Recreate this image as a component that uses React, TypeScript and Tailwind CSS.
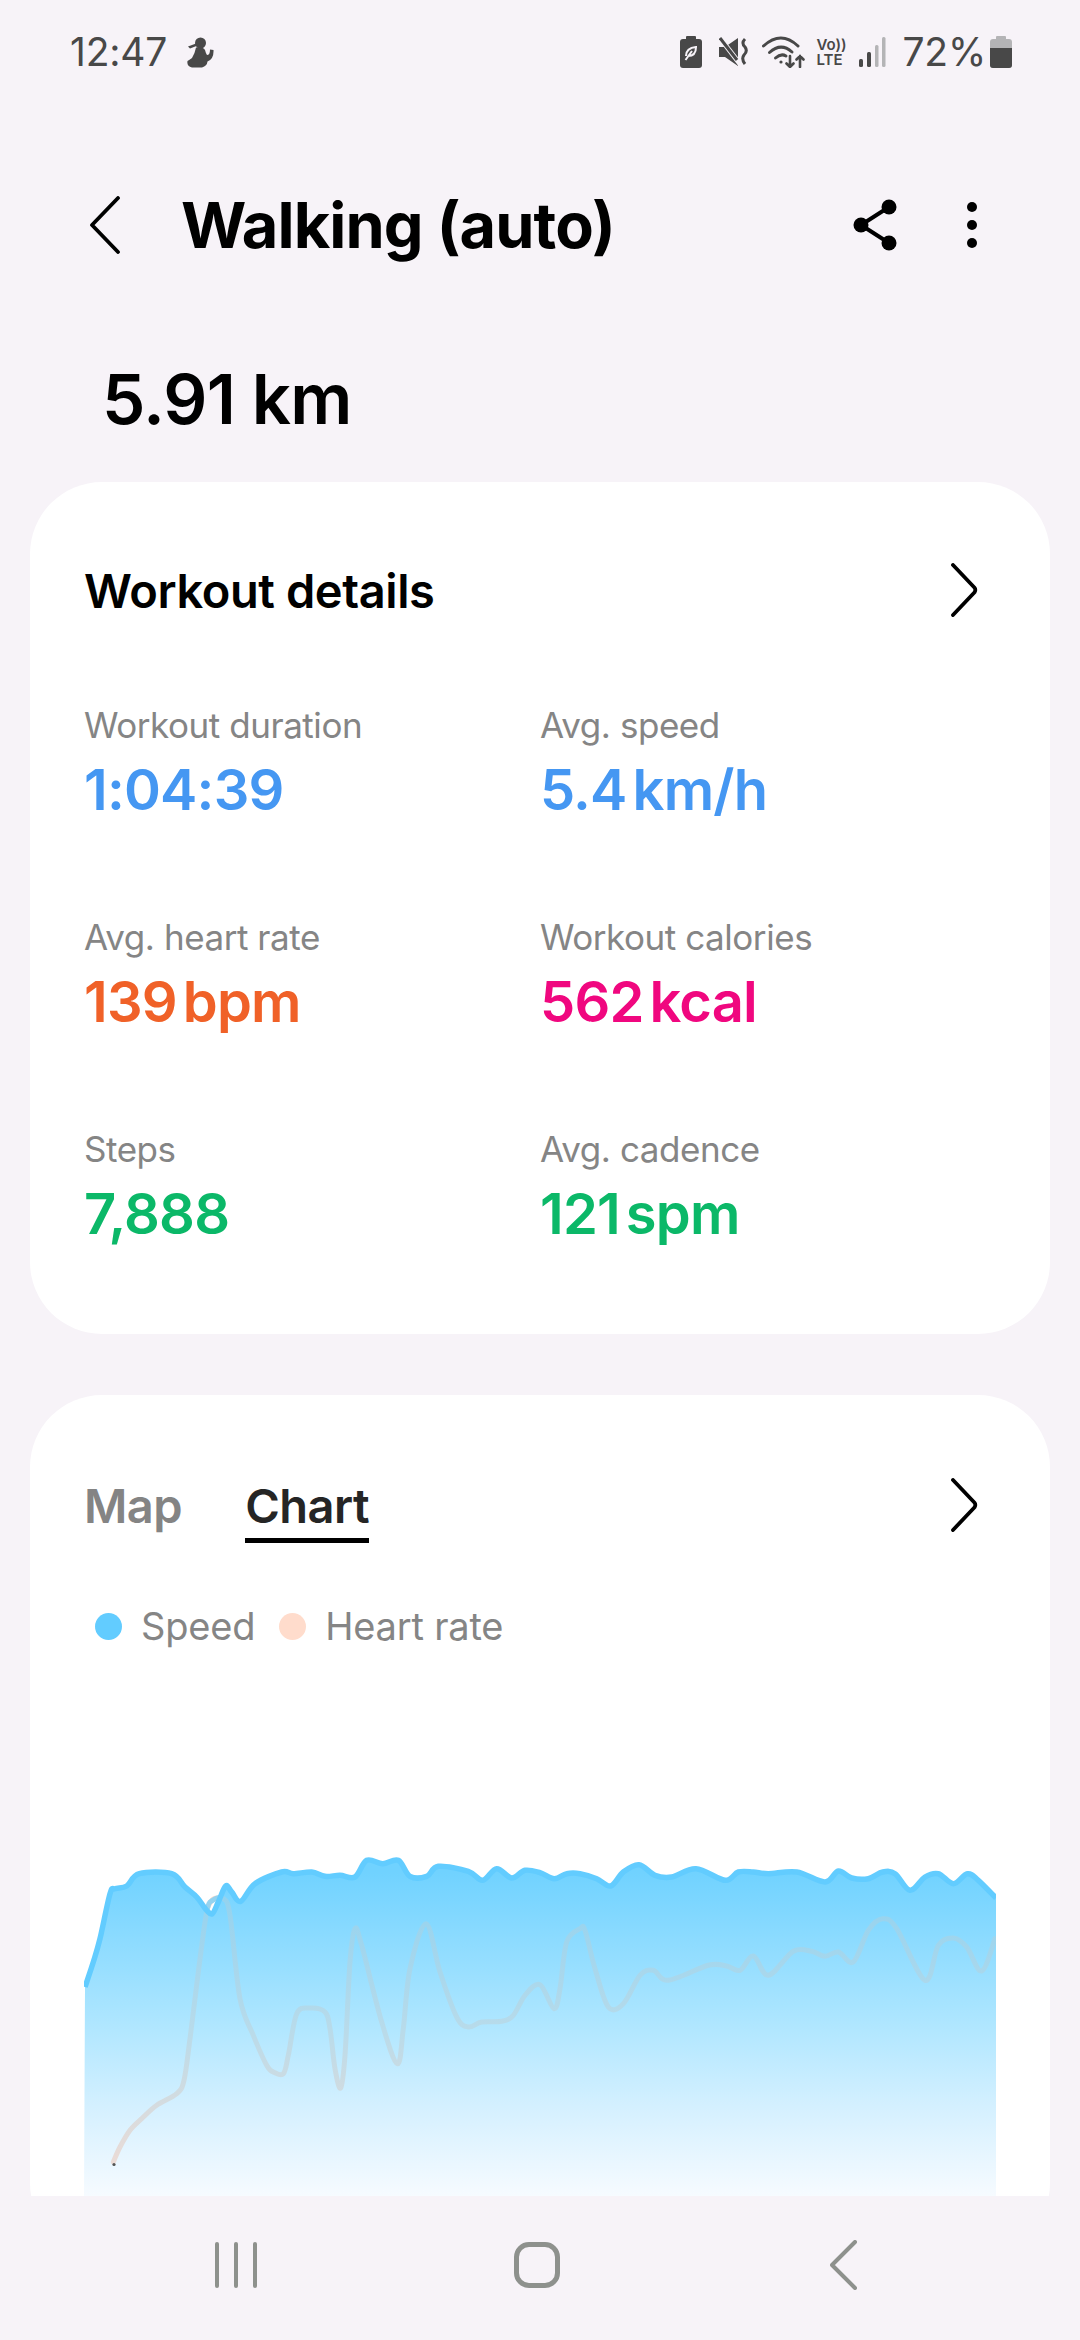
import React from "react";

type P = [number, number];

const speedA: P[] = [[75,495],[100,420],[120,350],[150,215],[165,200],[200,192],[238,155],[335,155],[375,195],[410,225],[440,265],[457,275],[475,240],[497,192],[515,210],[542,238],[585,185],[665,150],[700,155],[755,150],[795,163],[840,160],[885,165],[920,115],[968,125],[1015,115],[1050,163],[1100,163],[1135,133],[1225,148],[1268,175],[1310,140],[1355,168],[1395,145],[1440,152],[1483,170],[1520,155],[1560,155]];
const speedB: P[] = [[110,170],[152,192],[190,150],[237,128],[285,160],[335,165],[408,140],[495,175],[535,150],[580,150],[625,155],[710,150],[795,180],[835,147],[875,168],[925,170],[968,150],[1005,155],[1050,205],[1095,165],[1135,155],[1180,185],[1222,155],[1255,175],[1308,228]];
const hrA: P[] = [[160,1020],[180,975],[210,925],[245,890],[290,850],[350,815],[372,775],[390,650],[415,450],[440,270],[458,235],[490,230],[510,280],[540,530],[580,640],[620,730],[640,750],[670,755],[685,700],[710,575],[750,558],[795,570],[810,620],[825,740],[842,798],[855,700],[870,420],[885,320],[905,370],[965,600],[1012,725],[1030,620],[1050,440],[1098,305],[1140,450],[1190,585],[1225,615],[1265,600],[1325,598],[1360,580],[1395,520],[1440,488],[1482,560],[1500,500],[1520,360],[1560,320]];
const hrB: P[] = [[75,325],[105,440],[145,555],[190,545],[240,460],[280,445],[325,475],[445,430],[500,432],[540,445],[580,402],[625,460],[700,388],[755,388],[795,403],[835,390],[880,420],[925,325],[968,290],[1010,320],[1095,475],[1135,370],[1180,348],[1220,375],[1265,447],[1305,350]];

const toAbs = (a: P[], b: P[]): P[] => [
  ...a.map(([x, y]): P => [60 + x / 3, 1820 + y / 3]),
  ...b.map(([x, y]): P => [560 + x / 3, 1820 + y / 3]),
];

function smooth(pts: P[]): string {
  let d = `M${pts[0][0].toFixed(1)} ${pts[0][1].toFixed(1)}`;
  for (let i = 0; i < pts.length - 1; i++) {
    const p0 = pts[Math.max(i - 1, 0)];
    const p1 = pts[i];
    const p2 = pts[i + 1];
    const p3 = pts[Math.min(i + 2, pts.length - 1)];
    const k = 6;
    d += ` C${(p1[0] + (p2[0] - p0[0]) / k).toFixed(1)} ${(p1[1] + (p2[1] - p0[1]) / k).toFixed(1)} ${(p2[0] - (p3[0] - p1[0]) / k).toFixed(1)} ${(p2[1] - (p3[1] - p1[1]) / k).toFixed(1)} ${p2[0].toFixed(1)} ${p2[1].toFixed(1)}`;
  }
  return d;
}

const speedD = smooth(toAbs(speedA, speedB));
const hrD = smooth(toAbs(hrA, hrB));

function Chevron({ className }: { className?: string }) {
  return (
    <svg width="28" height="54" viewBox="0 0 28 54" className={className} fill="none">
      <path d="M3 2 L24.6 24.8 Q26 27 24.6 29.2 L3 52" stroke="#000" strokeWidth="3.8" strokeLinecap="round" strokeLinejoin="round" />
    </svg>
  );
}

function Stat({ label, value, unit, color }: { label: string; value: string; unit?: string; color: string }) {
  return (
    <div className="flex flex-col">
      <div className="text-[35px] leading-[40px] text-[#858585] tracking-[-0.45px]">{label}</div>
      <div className={`mt-[12px] flex items-baseline gap-[6px] text-[56px] leading-[66px] font-semibold tracking-[-0.8px] ${color}`}>
        <span>{value}</span>
        {unit ? <span>{unit}</span> : null}
      </div>
    </div>
  );
}

export default function App() {
  return (
    <div className="flex h-[2340px] w-[1080px] flex-col overflow-hidden bg-[#f7f3f8] font-['Inter','Roboto',sans-serif]">
      <div className="flex h-[2196px] flex-col overflow-hidden">
        {/* Status bar */}
        <div className="flex h-[104px] shrink-0 items-center justify-between pl-[70px] pr-[68px] text-[39px] text-[#484848]">
          <div className="flex items-center gap-[20px]">
            <span className="font-normal tracking-[-0.2px]">12:47</span>
            <svg width="27" height="31" viewBox="0 0 27 31" fill="#484848">
              <circle cx="13.5" cy="6" r="5.5" />
              <path d="M1 9.5 L9 6.5 L9.5 9 L3 11.5 Z" />
              <path d="M9 10.5 Q16 9.5 18 13 Q19 17 20 18 Q23 18 23 12.5 L26.5 13 Q27 22 20.5 24.5 Q20 29 15 30.5 L5 30.5 Q-0.5 29.5 0.5 24 Q3 22.5 5 21 Q8 16 9 10.5 Z" />
            </svg>
          </div>
          <div className="flex items-center">
            <svg width="22" height="32" viewBox="0 0 22 32" fill="#484848">
              <rect x="6" y="0" width="10" height="4" rx="1" />
              <rect x="0" y="3" width="22" height="29" rx="3" />
              <path d="M6 20 Q6 12 16 11 Q16 20 8 20 M5.5 24 L12 15" stroke="#f7f3f8" strokeWidth="2" fill="none" />
            </svg>
            <svg className="ml-[17px]" width="30" height="30" viewBox="0 0 30 30" fill="none">
              <path d="M0 10 L6 10 L19 1 L19 29 L6 20 L0 20 Z" fill="#484848" />
              <path d="M1 1 L21 27" stroke="#f7f3f8" strokeWidth="5" />
              <path d="M1 1 L18 23" stroke="#484848" strokeWidth="3" />
              <path d="M26 2 Q22 6 26 10 Q29 14 25 18 Q22 22 26 27" stroke="#484848" strokeWidth="3" />
            </svg>
            <svg className="ml-[13px]" width="44" height="32" viewBox="0 0 44 32" fill="none" stroke="#484848" strokeWidth="3" strokeLinecap="round">
              <path d="M1.5 10 Q19 -6 36 10" />
              <path d="M7.5 16.5 Q19 6 30 16" />
              <path d="M13.5 22 Q19 17 24 20" />
              <circle cx="19" cy="26" r="1.6" fill="#484848" stroke="none" />
              <path d="M28 20 L28 31 M24.5 27.5 L28 31 L31.5 27.5" strokeWidth="2.6" />
              <path d="M38 31 L38 20 M34.5 23.5 L38 20 L41.5 23.5" strokeWidth="2.6" />
            </svg>
            <div className="ml-[10px] flex w-[30px] flex-col items-center text-[15px] font-semibold leading-[15px] text-[#484848]">
              <span className="w-full text-left">Vo))</span>
              <span className="w-full text-left">LTE</span>
            </div>
            <svg className="ml-[13px]" width="27" height="30" viewBox="0 0 27 30" fill="none">
              <rect x="0" y="22" width="4" height="8" rx="1.5" fill="#484848" />
              <rect x="8" y="15" width="4" height="15" rx="1.5" fill="#484848" />
              <rect x="16" y="8" width="3.5" height="22" rx="1.5" fill="#b4b4b6" />
              <rect x="23" y="0" width="3.5" height="30" rx="1.5" fill="#b4b4b6" />
            </svg>
            <span className="ml-[16px] tracking-[-0.2px]">72%</span>
            <svg className="ml-[4px]" width="22" height="32" viewBox="0 0 22 32">
              <rect x="6" y="0" width="10" height="4" rx="1" fill="#b4b4b6" />
              <rect x="0" y="3" width="22" height="29" rx="3" fill="#b4b4b6" />
              <path d="M0 12 H22 V29 Q22 32 19 32 H3 Q0 32 0 29 Z" fill="#484848" />
            </svg>
          </div>
        </div>

        {/* Header */}
        <div className="mt-[51px] flex h-[140px] shrink-0 items-center pl-[89px]">
          <svg width="34" height="58" viewBox="0 0 34 58" fill="none">
            <path d="M29 2 L3 29 L29 56" stroke="#000" strokeWidth="3.8" strokeLinecap="round" strokeLinejoin="round" />
          </svg>
          <h1 className="ml-[58px] text-[63px] font-bold leading-none tracking-[-0.9px] text-black">Walking (auto)</h1>
          <svg className="ml-auto" width="46" height="52" viewBox="0 0 46 52" fill="#000">
            <circle cx="8" cy="26" r="7.5" />
            <circle cx="36" cy="8" r="7.5" />
            <circle cx="36" cy="44" r="7.5" />
            <path d="M8 26 L36 8 M8 26 L36 44" stroke="#000" strokeWidth="4" />
          </svg>
          <div className="ml-[68px] mr-[103px] flex flex-col gap-[8px]">
            <span className="h-[10px] w-[10px] rounded-full bg-black" />
            <span className="h-[10px] w-[10px] rounded-full bg-black" />
            <span className="h-[10px] w-[10px] rounded-full bg-black" />
          </div>
        </div>

        {/* Distance */}
        <div className="mt-[65px] h-[78px] shrink-0 pl-[102px] text-[69px] font-semibold leading-[78px] tracking-[-0.8px] text-black">
          5.91 km
        </div>

        {/* Workout details card */}
        <section className="mt-[44px] h-[852px] shrink-0 mx-[30px] rounded-[72px] bg-white pl-[54px] pr-[72px] pt-[78px]">
          <div className="flex h-[60px] items-center justify-between">
            <h2 className="text-[47px] font-semibold leading-none tracking-[-0.4px] text-black">Workout details</h2>
            <Chevron />
          </div>
          <div className="mt-[85px] grid grid-cols-[456px_1fr] gap-y-[94px]">
            <Stat label="Workout duration" value="1:04:39" color="text-[#4597f2]" />
            <Stat label="Avg. speed" value="5.4" unit="km/h" color="text-[#4597f2]" />
            <Stat label="Avg. heart rate" value="139" unit="bpm" color="text-[#f06128]" />
            <Stat label="Workout calories" value="562" unit="kcal" color="text-[#f0077f]" />
            <Stat label="Steps" value="7,888" color="text-[#0bb868]" />
            <Stat label="Avg. cadence" value="121" unit="spm" color="text-[#0bb868]" />
          </div>
        </section>

        {/* Chart card */}
        <section className="mt-[61px] h-[860px] shrink-0 mx-[30px] rounded-[72px] bg-white pl-[54px] pt-[83px]">
          <div className="flex h-[68px] items-start pr-[72px]">
            <span className="text-[47px] font-semibold leading-[56px] tracking-[-0.5px] text-[#848484]">Map</span>
            <span className="ml-[63px] flex flex-col items-stretch">
              <span className="text-[47px] font-semibold leading-[56px] tracking-[-0.5px] text-[#252525]">Chart</span>
              <span className="mt-[4px] h-[5px] bg-black" />
            </span>
            <Chevron className="ml-auto" />
          </div>
          <div className="mt-[60px] flex h-[40px] items-center pl-[11px] text-[38px] text-[#858585] tracking-[-0.2px]">
            <span className="h-[27px] w-[27px] rounded-full bg-[#62ccff]" />
            <span className="ml-[19px]">Speed</span>
            <span className="ml-[24px] h-[27px] w-[27px] rounded-full bg-[#ffdccc]" />
            <span className="ml-[19px]">Heart rate</span>
          </div>
          <svg className="mt-[176px] block" width="912" height="376" viewBox="84 1820 912 376">
            <defs>
              <linearGradient id="area" gradientUnits="userSpaceOnUse" x1="0" y1="1870" x2="0" y2="2196">
                <stop offset="0" stopColor="#70d2ff" />
                <stop offset="0.46" stopColor="#aee6ff" />
                <stop offset="0.72" stopColor="#d4f0ff" />
                <stop offset="1" stopColor="#f7fbff" />
              </linearGradient>
              <linearGradient id="hr" gradientUnits="userSpaceOnUse" x1="0" y1="1890" x2="0" y2="2165">
                <stop offset="0" stopColor="#92d2ef" />
                <stop offset="0.5" stopColor="#b8dbea" />
                <stop offset="1" stopColor="#ecdcd6" />
              </linearGradient>
            </defs>
            <path d="M208 1905 Q213 1893 219 1897" stroke="#fbdccd" strokeWidth="5" fill="none" strokeLinecap="round" />
            <path d={`${speedD} L996 2196 L84 2196 Z`} fill="url(#area)" />
            <path d={hrD} fill="none" stroke="url(#hr)" strokeWidth="5" strokeLinejoin="round" strokeLinecap="round" />
            <circle cx="114" cy="2162.5" r="1.6" fill="#555" />
            <path d={speedD} fill="none" stroke="#62ccff" strokeWidth="5.5" strokeLinejoin="round" />
          </svg>
        </section>
      </div>

      {/* Nav bar */}
      <div className="flex flex-1 items-center pb-[6px]">
        <div className="ml-[215px] flex gap-[15px]">
          <span className="h-[46px] w-[4px] rounded-full bg-[#8e918d]" />
          <span className="h-[46px] w-[4px] rounded-full bg-[#8e918d]" />
          <span className="h-[46px] w-[4px] rounded-full bg-[#8e918d]" />
        </div>
        <span className="ml-[257px] h-[46px] w-[46px] rounded-[15px] border-[5px] border-[#8e918d]" />
        <svg className="ml-[270px]" width="28" height="50" viewBox="0 0 28 50" fill="none">
          <path d="M25 2 L2 25 L25 48" stroke="#8e918d" strokeWidth="4" strokeLinecap="round" strokeLinejoin="round" />
        </svg>
      </div>
    </div>
  );
}
